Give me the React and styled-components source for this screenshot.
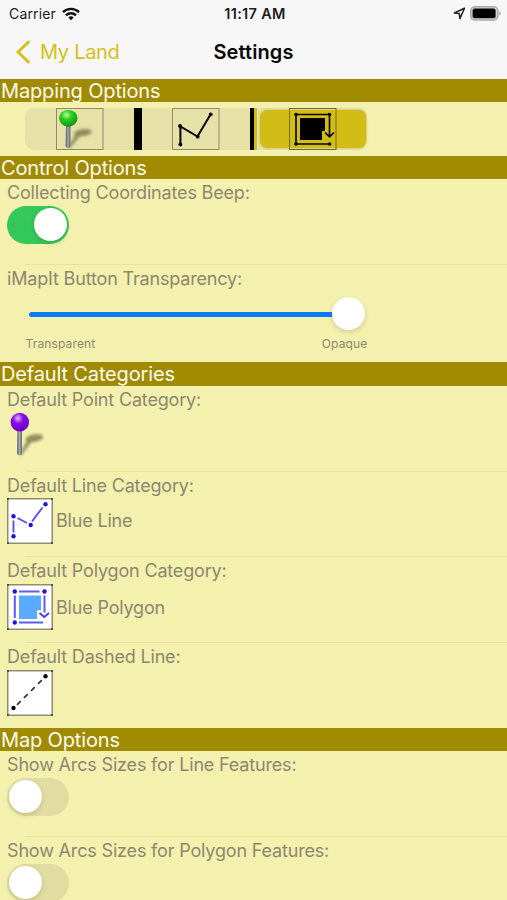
import React from 'react';
import styled, { createGlobalStyle } from 'styled-components';

const GlobalStyle = createGlobalStyle`
  body {
    margin: 0;
    overflow: hidden;
    background: #f4f0ae;
    font-family: Inter, 'Liberation Sans', sans-serif;
  }
`;

const Screen = styled.div`
  width: 507px;
  height: 900px;
  overflow: hidden;
  background: #f4f0ae;
`;

const StatusBar = styled.div`
  height: 27px;
  display: grid;
  grid-template-columns: 1fr auto 1fr;
  align-items: center;
  padding: 0 6px 0 9px;
  background: #f7f7f7;
  color: #1c1c1c;
  font-size: 14px;
`;

const Carrier = styled.div`
  display: flex;
  align-items: center;
  gap: 6px;
  letter-spacing: 0.15px;
`;

const Clock = styled.div`
  font-size: 14.5px;
  font-weight: 600;
  letter-spacing: 0.3px;
`;

const StatusIcons = styled.div`
  display: flex;
  align-items: center;
  justify-content: flex-end;
  gap: 4px;
`;

const NavBar = styled.div`
  height: 52px;
  display: grid;
  grid-template-columns: 1fr auto 1fr;
  align-items: center;
  padding: 0 15px 2px;
  box-sizing: border-box;
  background: #f7f7f7;
`;

const BackButton = styled.div`
  display: flex;
  align-items: center;
  gap: 9px;
  color: #d4bf1c;
  font-size: 20px;
  letter-spacing: -0.3px;
`;

const Title = styled.div`
  color: #080808;
  font-size: 20px;
  font-weight: 600;
  letter-spacing: 0.1px;
`;

const SectionHeader = styled.div`
  height: ${(p) => p.$height || 23}px;
  line-height: 24px;
  padding-left: 1px;
  background: #a08a00;
  color: #fffdf0;
  font-size: 20px;
  letter-spacing: -0.15px;
`;

const SegmentRow = styled.div`
  height: 54px;
  padding: 6px 0 0 25px;
  box-sizing: border-box;
`;

const Segments = styled.div`
  width: 342px;
  height: 42px;
  display: flex;
  border-radius: 9px;
  background: #e6e1a7;
`;

const Segment = styled.div`
  width: ${(p) => p.$width}px;
  display: flex;
  align-items: center;
  justify-content: center;
`;

const ActiveSegment = styled(Segment)`
  margin: 2px 1px 2px 3px;
  border-radius: 7px;
  background: #d2bd17;
  box-shadow: 0 0 2px 1px rgba(150, 135, 30, 0.22);
`;

const Divider = styled.div`
  width: ${(p) => p.$width}px;
  background: #000;
  border-right: ${(p) => (p.$edge ? '3px solid #d2bd17' : 'none')};
`;

const Row = styled.div`
  height: ${(p) => p.$height || 85.5}px;
  padding-left: 7px;
  box-sizing: border-box;
  background: ${(p) =>
    p.$last
      ? 'none'
      : 'linear-gradient(#e6e1a3, #e6e1a3) 25px 100% / 100% 1px no-repeat'};
`;

const Label = styled.div`
  height: 27px;
  line-height: 27px;
  color: #8c8870;
  font-size: 18px;
  letter-spacing: -0.17px;
  white-space: nowrap;
`;

const Category = styled.div`
  display: flex;
  align-items: center;
  gap: 3px;
  margin-top: ${(p) => (p.$low ? 0 : -1)}px;
  color: #8c8870;
  font-size: 18px;
  letter-spacing: -0.18px;

  svg {
    display: block;
  }
`;

const Switch = styled.div`
  width: 62px;
  height: 37.5px;
  display: flex;
  align-items: center;
  justify-content: ${(p) => (p.$on ? 'flex-end' : 'flex-start')};
  padding: 0 2px;
  box-sizing: border-box;
  border-radius: 19px;
  background: ${(p) => (p.$on ? '#34c759' : '#e1dda2')};
`;

const Knob = styled.div`
  width: 33px;
  height: 33px;
  flex: none;
  border-radius: 50%;
  background: #fff;
  box-shadow: 0 2px 5px rgba(60, 55, 0, 0.18);
`;

const Slider = styled.div`
  width: 336px;
  height: 33px;
  display: flex;
  align-items: center;
  margin: 5px 0 0 22px;
`;

const Track = styled.div`
  flex: 1;
  height: 5px;
  margin: 2px -4px 0 0;
  border-radius: 3px;
  background: #0a7aff;
`;

const SliderLabels = styled.div`
  width: 342px;
  display: flex;
  justify-content: space-between;
  margin: 6px 0 0 18.5px;
  color: #8c8870;
  font-size: 12px;
  line-height: 16px;
  letter-spacing: 0.15px;
`;

const WifiIcon = () => (
  <svg width="18" height="14" viewBox="0 0 18 14" fill="none" stroke="#111" strokeWidth="2.4">
    <path d="M1 5.2C5.4 0.7 12.6 0.7 17 5.2" />
    <path d="M4 8.3C6.8 5.5 11.2 5.5 14 8.3" />
    <path d="M6.3 10.4C7.8 8.9 10.2 8.9 11.7 10.4L9 13.2Z" fill="#111" stroke="none" />
  </svg>
);

const LocationIcon = () => (
  <svg width="13" height="13" viewBox="0 0 13 13" fill="none" stroke="#222" strokeWidth="1.5" strokeLinejoin="round">
    <path d="M11.5 1.3L1.3 6L6.3 6.6L6.9 11.6Z" />
  </svg>
);

const BatteryIcon = () => (
  <svg width="31" height="15" viewBox="0 0 31 15">
    <rect x="0.8" y="0.8" width="27" height="13.2" rx="4" fill="#d8d8d8" stroke="#aaa" strokeWidth="1.6" />
    <rect x="2.6" y="2.6" width="23" height="9.6" rx="2" fill="#000" />
    <path d="M29.2 5.2Q30.8 6.2 30.8 7.4T29.2 9.6Z" fill="#aaa" />
  </svg>
);

const BackChevron = () => (
  <svg width="16" height="24" viewBox="0 0 16 24" fill="none" stroke="#d4bf1c" strokeWidth="2.9">
    <path d="M14.2 1.3L3 12L14.2 22.7" />
  </svg>
);

const Pin = ({ id, light, color, dark, framed }) => (
  <svg width={framed ? 48 : 46} height={framed ? 42 : 46} viewBox={framed ? '0 0 48 42' : '-0.5 0 46 46'}>
    <defs>
      <radialGradient id={id} cx="0.4" cy="0.3" r="0.7">
        <stop offset="0" stopColor={light} />
        <stop offset="0.4" stopColor={color} />
        <stop offset="1" stopColor={dark} />
      </radialGradient>
      <linearGradient id={`${id}-stem`}>
        <stop offset="0" stopColor="#50555c" />
        <stop offset="0.5" stopColor="#a9adb4" />
        <stop offset="1" stopColor="#555b61" />
      </linearGradient>
      <filter id={`${id}-blur`} x="-50%" y="-50%" width="200%" height="200%">
        <feGaussianBlur stdDeviation="1.6" />
      </filter>
    </defs>
    {framed && <rect x="0.5" y="0.5" width="46.5" height="41" fill="none" stroke="#8f8b68" />}
    <g transform={framed ? 'translate(0 0)' : 'translate(0 -1.5) scale(1 1.12)'}>
      <g filter={`url(#${id}-blur)`} fill="#817d4f" opacity="0.85">
        <ellipse cx="26.8" cy="24.7" rx="9" ry="3.4" transform="rotate(-8 26.8 24.7)" />
        <path d="M12 39L20 26L24 28L14 40Z" />
      </g>
      <path d="M10 17H14.4V38Q14.6 40 12.2 40T9.6 38Z" fill={`url(#${id}-stem)`} />
      <ellipse cx="12.3" cy="10.3" rx="9.2" ry="8.4" fill={`url(#${id})`} />
    </g>
  </svg>
);

const LineOutline = () => (
  <svg width="48" height="42" viewBox="0 0 48 42">
    <rect x="0.5" y="0.5" width="46.5" height="41" fill="none" stroke="#8f8b68" />
    <path d="M8.4 36V18.5L25.5 28.5L38.5 6.5" fill="none" stroke="#000" strokeWidth="2" />
    <g fill="#000">
      <circle cx="8.4" cy="36.5" r="1.9" />
      <circle cx="8" cy="18" r="1.9" />
      <circle cx="25.7" cy="28.7" r="1.9" />
      <circle cx="38.7" cy="6.4" r="1.9" />
    </g>
  </svg>
);

const PolygonOutline = () => (
  <svg width="48" height="42" viewBox="0 0 48 42">
    <rect x="0.5" y="0.5" width="46.5" height="41" fill="none" stroke="#746b20" />
    <path d="M11 10H36V23H33V32H11Z" fill="#000" />
    <path d="M40.5 36H7V6.5H40.5V28M36 24.5L40.5 28.8L45 24.5" fill="none" stroke="#000" strokeWidth="1.6" />
    <g fill="#000">
      <circle cx="7" cy="6.5" r="1.8" />
      <circle cx="40.5" cy="6.5" r="1.8" />
      <circle cx="7" cy="36" r="1.8" />
      <circle cx="40.7" cy="36" r="1.7" />
    </g>
  </svg>
);

const Tile = ({ children }) => (
  <svg width="46" height="46" viewBox="0 0 46 46" fill="none">
    <rect x="0.8" y="0.8" width="44.4" height="44.4" fill="#fff" stroke="#77735e" strokeWidth="1.2" />
    <path d="M0 0H2V2H0ZM44 0H46V2H44ZM0 44H2V46H0ZM44 44H46V46H44Z" fill="#55524a" />
    {children}
  </svg>
);

const BlueLine = () => (
  <Tile>
    <g stroke="#5850ec" strokeWidth="1.9">
      <path d="M6.5 22.5V34.5M10.5 20L20 25M25 23.5L35.5 9.5" />
    </g>
    <g fill="#1a14e0">
      <circle cx="6.5" cy="18.3" r="2.2" />
      <circle cx="6.5" cy="38.3" r="2.2" />
      <circle cx="23.7" cy="27" r="2.2" />
      <circle cx="38.5" cy="6.3" r="2.2" />
    </g>
  </Tile>
);

const BluePolygon = () => (
  <Tile>
    <path d="M12 11.5H34V26H30V35H12Z" fill="#5aabff" />
    <g stroke="#6259ee" strokeWidth="2">
      <path d="M12 7.5H32.5M7.8 11.5V34M12 38.5H36M37.5 11.5V28.5" />
    </g>
    <path d="M32.5 29L37.2 33L42 29" stroke="#4840e0" strokeWidth="2" />
    <g fill="#1a14e0">
      <circle cx="7.8" cy="7.5" r="2.2" />
      <circle cx="37.5" cy="7.5" r="2.2" />
      <circle cx="7.8" cy="38.5" r="2.2" />
    </g>
  </Tile>
);

const DashedLine = () => (
  <Tile>
    <path d="M10 34.8L36 9" stroke="#333" strokeWidth="1.7" strokeDasharray="5.2 4.7" />
    <circle cx="6.5" cy="38" r="2.2" fill="#080808" />
    <circle cx="38.5" cy="6.3" r="2.2" fill="#080808" />
  </Tile>
);

const App = () => {
  return (
    <Screen>
      <GlobalStyle />
      <StatusBar>
        <Carrier>
          Carrier <WifiIcon />
        </Carrier>
        <Clock>11:17 AM</Clock>
        <StatusIcons>
          <LocationIcon />
          <BatteryIcon />
        </StatusIcons>
      </StatusBar>
      <NavBar>
        <BackButton>
          <BackChevron />
          My Land
        </BackButton>
        <Title>Settings</Title>
      </NavBar>

      <SectionHeader>Mapping Options</SectionHeader>
      <SegmentRow>
        <Segments>
          <Segment $width={109}>
            <Pin id="green" light="#b9ff9c" color="#2bcf22" dark="#129413" framed />
          </Segment>
          <Divider $width={8} />
          <Segment $width={108}>
            <LineOutline />
          </Segment>
          <Divider $width={4} $edge />
          <ActiveSegment $width={106}>
            <PolygonOutline />
          </ActiveSegment>
        </Segments>
      </SegmentRow>

      <SectionHeader>Control Options</SectionHeader>
      <Row $height={86}>
        <Label>Collecting Coordinates Beep:</Label>
        <Switch $on>
          <Knob />
        </Switch>
      </Row>
      <Row $height={97} $last>
        <Label>iMapIt Button Transparency:</Label>
        <Slider>
          <Track />
          <Knob />
        </Slider>
        <SliderLabels>
          <span>Transparent</span>
          <span>Opaque</span>
        </SliderLabels>
      </Row>

      <SectionHeader $height={24}>Default Categories</SectionHeader>
      <Row>
        <Label>Default Point Category:</Label>
        <Category>
          <Pin id="purple" light="#e3b5ff" color="#8c0bea" dark="#6a00c0" />
        </Category>
      </Row>
      <Row>
        <Label>Default Line Category:</Label>
        <Category>
          <BlueLine />
          Blue Line
        </Category>
      </Row>
      <Row>
        <Label>Default Polygon Category:</Label>
        <Category $low>
          <BluePolygon />
          Blue Polygon
        </Category>
      </Row>
      <Row $last>
        <Label>Default Dashed Line:</Label>
        <Category $low>
          <DashedLine />
        </Category>
      </Row>

      <SectionHeader>Map Options</SectionHeader>
      <Row $height={86}>
        <Label>Show Arcs Sizes for Line Features:</Label>
        <Switch>
          <Knob />
        </Switch>
      </Row>
      <Row $last>
        <Label>Show Arcs Sizes for Polygon Features:</Label>
        <Switch>
          <Knob />
        </Switch>
      </Row>
    </Screen>
  );
};

export default App;
